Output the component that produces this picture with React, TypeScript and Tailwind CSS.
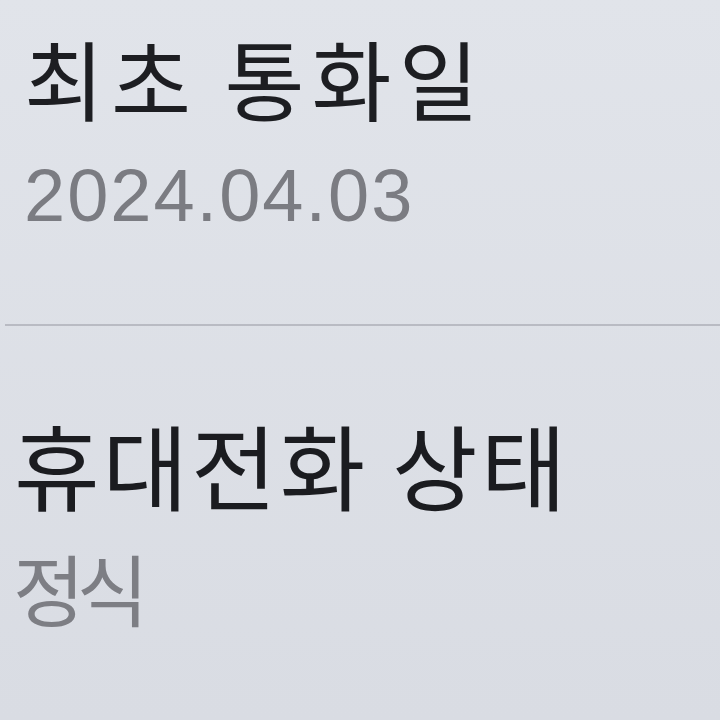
export default function App() {
  return (
    <div
      className="w-[720px] h-[720px] overflow-hidden bg-linear-to-b from-[#e1e4ea] to-[#d9dce3] flex flex-col"
      style={{ fontFamily: '"Noto Sans CJK KR", "Noto Sans", sans-serif' }}
    >
      <section className="pl-[24px] pt-[14px] h-[324px] flex flex-col">
        <h2 className="text-[87px] leading-[126px] text-[#1d1e22] tracking-[7px]">최초 통화일</h2>
        <p className="mt-[13px] text-[74px] leading-[85px] text-[#7b7c82] tracking-[2px] font-['Liberation_Sans',sans-serif]">
          2024.04.03
        </p>
      </section>
      <div className="ml-[5px] h-[2px] bg-[#b9bbc3]" />
      <section className="pl-[14px] pt-[70px] flex flex-col">
        <h2 className="text-[93px] leading-[135px] text-[#1b1c20] tracking-[3px]">휴대전화 상태</h2>
        <p className="-ml-[1px] text-[78px] leading-[113px] text-[#7d7e84] tracking-[-8px]">정식</p>
      </section>
    </div>
  );
}
